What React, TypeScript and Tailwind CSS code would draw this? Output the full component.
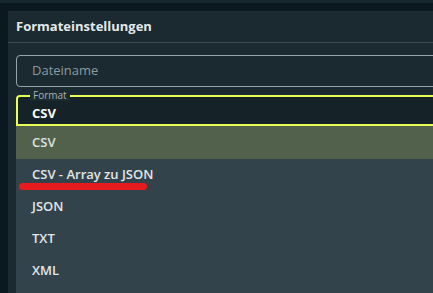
const formats = ['CSV', 'CSV - Array zu JSON', 'JSON', 'TXT', 'XML'];

export default function App() {
  const selected = 'CSV';

  return (
    <div
      className="w-[433px] h-[293px] overflow-hidden bg-[#0c1820]"
      style={{ fontFamily: '"Open Sans", "Noto Sans", sans-serif' }}
    >
      <div className="h-[3px] bg-[#172830]" />
      <div className="h-[8px]" />
      <div className="ml-[8px] h-[282px] bg-[#1a2a30] overflow-hidden">
        <div className="h-[31px] flex items-center px-[8px] pt-[1px]">
          <h2 className="text-[13px] font-bold text-[#e4e8ea]">Formateinstellungen</h2>
        </div>
        <div className="h-px bg-[#3a4a50]" />

        <div className="pl-[8px] pt-[12px] relative">
          <div className="h-[32px] -mr-[20px] border border-[#96a4aa] rounded-[4px] flex items-center pl-[15px]">
            <span className="text-[13px] text-[#8b9ba1]">Dateiname</span>
          </div>

          <div className="mt-[8px] -mr-[20px] h-[31px] border-2 border-[#e9ff55] rounded-t-[4px] bg-[#152329] relative flex items-end pl-[14px] pb-[3px]">
            <span className="absolute -top-[7px] left-[12px] px-[3px] bg-[#1a2a30] text-[10px] leading-[11px] text-[#a3b3bb]">
              Format
            </span>
            <span className="text-[13px] leading-[16px] font-bold text-white">{selected}</span>
          </div>

          <ul className="-mr-[20px]">
            {formats.map((f) => (
              <li
                key={f}
                className={
                  f === selected
                    ? 'h-[33px] flex items-center pl-[16px] bg-[#52614b] text-[13px] font-semibold text-[#dfe3e1]'
                    : 'h-[32px] flex items-center pl-[16px] bg-[#33434b] text-[13px] font-semibold text-[#e2e6e8]'
                }
              >
                {f}
              </li>
            ))}
            <li className="h-[40px] bg-[#33434b]" />
          </ul>

          {/* red annotation stroke */}
          <div className="absolute left-[11px] top-[140px] w-[128px] h-[7px] rounded-full bg-[#e61b1d]" />
        </div>
      </div>
    </div>
  );
}
